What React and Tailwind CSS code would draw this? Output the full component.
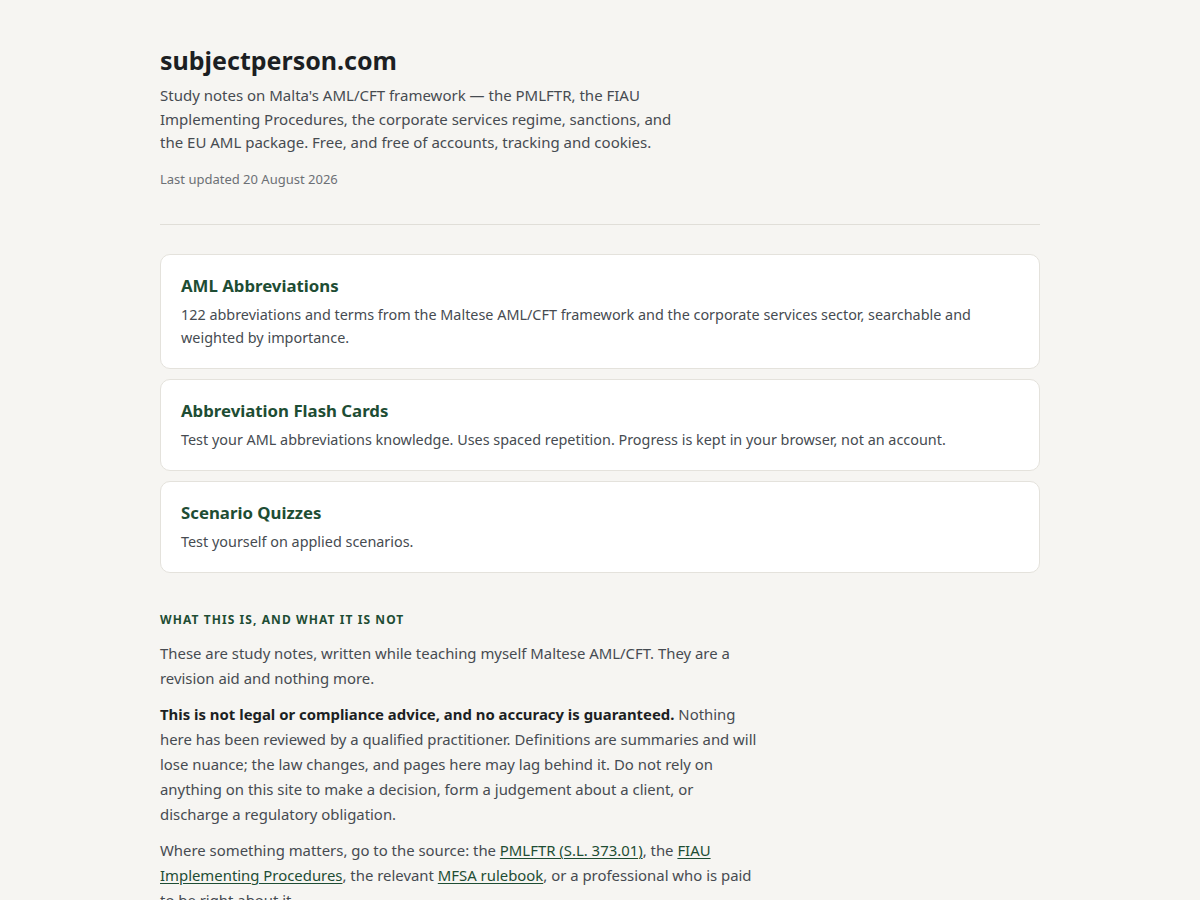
import React from 'react';

const TOOLS = [
  {
    title: 'AML Abbreviations',
    desc: '122 abbreviations and terms from the Maltese AML/CFT framework and the corporate services sector, searchable and weighted by importance.',
  },
  {
    title: 'Abbreviation Flash Cards',
    desc: 'Test your AML abbreviations knowledge. Uses spaced repetition. Progress is kept in your browser, not an account.',
  },
  {
    title: 'Scenario Quizzes',
    desc: 'Test yourself on applied scenarios.',
  },
];

const Link = ({ children }) => (
  <a href="#" className="text-[#1e4d34] underline underline-offset-2 decoration-1">{children}</a>
);

export default function App() {
  return (
    <div className="min-h-screen bg-[#f6f5f2] text-[#464b51]" style={{ fontFamily: '"Noto Sans", sans-serif' }}>
      <main className="mx-auto w-[880px] pt-[41px] pb-16">
        <header>
          <h1 className="text-[25px] font-bold leading-[38px] text-[#1c1f23]">subjectperson.com</h1>
          <p className="mt-[5px] max-w-[535px] text-[15px] leading-[23.5px]">
            Study notes on Malta's AML/CFT framework — the PMLFTR, the FIAU Implementing Procedures, the corporate services regime, sanctions, and the EU AML package. Free, and free of accounts, tracking and cookies.
          </p>
          <p className="mt-[14px] text-[13px] leading-[20px] text-[#6c7075]">Last updated 20 August 2026</p>
        </header>

        <hr className="mt-[35px] border-0 border-t border-[#e0ded8]" />

        <div className="mt-[29px] flex flex-col gap-[10px]">
          {TOOLS.map((t) => (
            <a key={t.title} href="#" className="block rounded-[10px] border border-[#e4e2dc] bg-white px-5 pt-[19px] pb-[19px]">
              <h2 className="text-[16.8px] font-bold leading-[24px] text-[#1e4d34]">{t.title}</h2>
              <p className="mt-[5px] text-[14.4px] leading-[23px] text-[#464b51]">{t.desc}</p>
            </a>
          ))}
        </div>

        <section className="mt-[38px] max-w-[600px]">
          <h3 className="text-[12px] font-bold uppercase tracking-[0.09em] leading-[18px] text-[#1e4d34]">What this is, and what it is not</h3>
          <p className="mt-[12px] text-[14.9px] leading-[25px]">
            These are study notes, written while teaching myself Maltese AML/CFT. They are a revision aid and nothing more.
          </p>
          <p className="mt-[11px] text-[14.9px] leading-[25px]">
            <strong className="font-bold text-[#1c1f23]">This is not legal or compliance advice, and no accuracy is guaranteed.</strong> Nothing here has been reviewed by a qualified practitioner. Definitions are summaries and will lose nuance; the law changes, and pages here may lag behind it. Do not rely on anything on this site to make a decision, form a judgement about a client, or discharge a regulatory obligation.
          </p>
          <p className="mt-[11px] text-[14.9px] leading-[25px]">
            Where something matters, go to the source: the <Link>PMLFTR (S.L. 373.01)</Link>, the <Link>FIAU Implementing Procedures</Link>, the relevant <Link>MFSA rulebook</Link>, or a professional who is paid to be right about it.
          </p>
        </section>
      </main>
    </div>
  );
}
